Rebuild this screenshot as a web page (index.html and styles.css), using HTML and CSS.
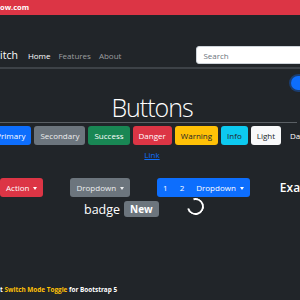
FILE: index.html
```html
<!DOCTYPE html>
<html lang="en">
<head>
    <meta charset="UTF-8">
    <meta name="viewport" content="width=device-width, initial-scale=1.0">
    <title>Dark Switch</title>
    <link rel="stylesheet" href="styles.css">
</head>
<body>
    <div class="banner">ow.com</div>

    <nav class="navbar">
        <span class="brand">itch</span>
        <a class="nav-link active" href="#">Home</a>
        <a class="nav-link" href="#">Features</a>
        <a class="nav-link" href="#">About</a>
        <input class="search" type="text" placeholder="Search">
    </nav>

    <main class="content">
        <div class="switch-row">
            <span class="switch"><span class="switch-thumb"></span></span>
        </div>

        <h1 class="title">Buttons</h1>
        <hr class="rule">

        <div class="btn-row">
            <button class="btn btn-primary">Primary</button>
            <button class="btn btn-secondary">Secondary</button>
            <button class="btn btn-success">Success</button>
            <button class="btn btn-danger">Danger</button>
            <button class="btn btn-warning">Warning</button>
            <button class="btn btn-info">Info</button>
            <button class="btn btn-light">Light</button>
            <button class="btn btn-dark">Dark</button>
            <button class="btn btn-link">Link</button>
        </div>

        <div class="dropdown-row">
            <button class="btn btn-danger caret">Action</button>
            <button class="btn btn-secondary caret">Dropdown</button>
            <div class="btn-group">
                <button class="btn btn-primary">1</button>
                <button class="btn btn-primary">2</button>
                <button class="btn btn-primary caret">Dropdown</button>
            </div>
            <h5 class="example">Example</h5>
        </div>

        <div class="badge-row">
            <span class="badge-label">badge</span>
            <span class="badge">New</span>
            <span class="spinner"></span>
        </div>
    </main>

    <footer class="credit">t <span class="accent">Switch Mode Toggle</span> for Bootstrap 5</footer>
</body>
</html>
```

FILE: styles.css
```css
html, body {
    overflow: hidden;
}
body {
    margin: 0;
    background-color: #212529;
    color: #dee2e6;
    font-family: "Open Sans", "Noto Sans", sans-serif;
    font-size: 8px;
}
.banner {
    height: 15px;
    background-color: #dc3545;
    color: #fff;
    font-weight: 700;
    font-size: 7.5px;
    line-height: 15px;
}

/* navbar */
.navbar {
    display: flex;
    align-items: center;
    height: 18px;
    padding: 31px 0 3px;
    border-bottom: 2px solid #3d4247;
}
.brand {
    color: #fff;
    font-size: 10.5px;
    margin-right: 6px;
}
.nav-link {
    color: rgba(255, 255, 255, 0.55);
    text-decoration: none;
    padding: 0 4px;
}
.nav-link.active {
    color: #fff;
}
.search {
    flex-shrink: 0;
    box-sizing: border-box;
    width: 140px;
    height: 18px;
    margin-left: 71px;
    padding: 0 6px;
    border: 1px solid #ced4da;
    border-radius: 3px;
    background-color: #fff;
    font-family: inherit;
    font-size: 8px;
}
.search::placeholder {
    color: #6c757d;
}

/* page body */
.content {
    width: 340px;
    margin-left: -18px;
}
.switch-row {
    display: flex;
    justify-content: flex-end;
    padding: 7px 1px 0 0;
}
.switch {
    position: relative;
    width: 30px;
    height: 14px;
    border-radius: 7px;
    background-color: #0d6efd;
    box-shadow: 0 0 0 2px rgba(13, 110, 253, 0.35);
}
.switch-thumb {
    position: absolute;
    top: 2px;
    right: 2px;
    width: 10px;
    height: 10px;
    border-radius: 50%;
    background-color: #fff;
}
.title {
    margin: 5px 0 0;
    text-align: center;
    font-size: 25px;
    font-weight: 300;
    letter-spacing: -1px;
    line-height: 25px;
    color: #fff;
}
.rule {
    margin: 2px 25px 3px 0;
    border: 0;
    border-top: 1px solid #5a5f64;
}

/* buttons */
.btn-row {
    display: flex;
    flex-wrap: wrap;
    justify-content: center;
    gap: 0 3px;
}
.btn {
    box-sizing: border-box;
    height: 19px;
    padding: 0 5px;
    border: 1px solid transparent;
    border-radius: 3px;
    font-family: inherit;
    font-size: 8px;
    line-height: 17px;
    color: #fff;
    white-space: nowrap;
}
.btn-primary { background-color: #0d6efd; }
.btn-secondary { background-color: #6c757d; color: #eceeef; }
.btn-success { background-color: #198754; }
.btn-danger { background-color: #dc3545; }
.btn-warning { background-color: #ffc107; color: #212529; }
.btn-info { background-color: #0dcaf0; color: #212529; }
.btn-light { background-color: #f8f9fa; color: #212529; }
.btn-dark { background-color: #212529; color: #fff; }
.btn-link {
    background: none;
    color: #0d6efd;
    text-decoration: underline;
}
.caret::after {
    content: "";
    display: inline-block;
    margin-left: 4px;
    vertical-align: 1px;
    border-top: 3px solid;
    border-left: 2.5px solid transparent;
    border-right: 2.5px solid transparent;
}

.dropdown-row {
    display: flex;
    align-items: center;
    gap: 27px;
    margin-top: 14px;
    padding-left: 18px;
}
.btn-group {
    display: flex;
}
.btn-group .btn {
    border-radius: 0;
}
.btn-group .btn:first-child {
    border-radius: 3px 0 0 3px;
}
.btn-group .btn:last-child {
    border-radius: 0 3px 3px 0;
}
.example {
    margin: 0 0 0 3px;
    font-size: 12px;
    font-weight: 600;
    color: #fff;
}

.badge-row {
    display: flex;
    align-items: center;
    height: 20px;
    margin-top: 2px;
    padding-left: 102px;
}
.badge-label {
    font-size: 12.5px;
    color: #fff;
    margin-right: 4px;
}
.badge {
    padding: 0 6px;
    line-height: 16px;
    border-radius: 3px;
    background-color: #6c757d;
    color: #fff;
    font-size: 10px;
    font-weight: 700;
}
.spinner {
    box-sizing: border-box;
    width: 17px;
    height: 17px;
    margin: 0 0 6px 28px;
    border: 2px solid #fff;
    border-left-color: transparent;
    border-radius: 50%;
    transform: rotate(30deg);
}

.credit {
    margin-top: 66px;
    font-size: 6.4px;
    font-weight: 700;
    color: #fff;
}
.credit .accent {
    color: #ffc107;
}
```
